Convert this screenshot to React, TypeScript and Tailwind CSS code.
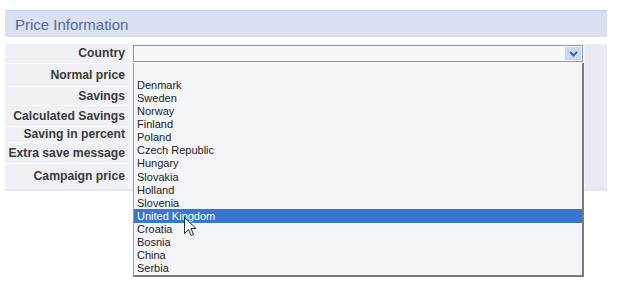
import React from "react";

const rows: { label: string; h: string }[] = [
  { label: "Country", h: "h-[20px]" },
  { label: "Normal price", h: "h-[23px]" },
  { label: "Savings", h: "h-[19px]" },
  { label: "Calculated Savings", h: "h-[21px]" },
  { label: "Saving in percent", h: "h-[16px]" },
  { label: "Extra save message", h: "h-[21px]" },
  { label: "Campaign price", h: "h-[25px]" },
];

const countries = [
  "",
  "Denmark",
  "Sweden",
  "Norway",
  "Finland",
  "Poland",
  "Czech Republic",
  "Hungary",
  "Slovakia",
  "Holland",
  "Slovenia",
  "United Kingdom",
  "Croatia",
  "Bosnia",
  "China",
  "Serbia",
];

export default function App() {
  return (
    <div
      className="relative w-[627px] h-[289px] bg-white overflow-hidden"
      style={{ fontFamily: '"Liberation Sans", Arial, sans-serif' }}
    >
      <div className="ml-[5px] w-[602px] pt-[10px]">
        <div className="h-[27px] bg-[#d9e0ef] border-t border-[#c6cee2] flex items-center pl-[10px] pt-[2px] text-[15px] text-[#5a6a9c]">
          Price Information
        </div>
        <div className="mt-[7px] flex border-b-[2px] border-[#e6e8ee]">
          <div className="w-[123px] bg-[#eef0f4] flex flex-col">
            {rows.map((r, i) => (
              <div
                key={r.label}
                className={`${r.h} flex items-center justify-end pr-[3px] text-[12.2px] font-bold text-[#3a3a3a] whitespace-nowrap ${
                  i < rows.length - 1 ? "border-b border-[#fafbfc]" : ""
                }`}
              >
                {r.label}
              </div>
            ))}
          </div>
          <div className="w-[457px] bg-[#f5f6f9] pl-[5px] pt-[1px]">
            <div className="w-[450px] h-[17px] border border-[#8a97b0] bg-[#f7f8fb] flex justify-end items-stretch p-[1px]">
              <div className="w-[16px] bg-[#c9d6ef] flex items-center justify-center">
                <svg width="9" height="6" viewBox="0 0 9 6">
                  <path d="M1 1 L4.5 4.5 L8 1" fill="none" stroke="#3f5fa8" strokeWidth="1.8" />
                </svg>
              </div>
            </div>
          </div>
          <div className="w-[22px] bg-[#e8ebf3]" />
        </div>
      </div>

      {/* dropdown list */}
      <div className="absolute left-[133px] top-[63px] w-[451px] h-[214px] bg-[#f4f5f9] border-l border-[#9a9a9a] border-r-[2px] border-b-[2px] border-r-[#7c7c7c] border-b-[#7c7c7c] flex flex-col pt-[2px]">
        {countries.map((c, i) => (
          <div
            key={i}
            className={`h-[13.25px] flex items-center pl-[3px] pt-[1px] text-[11px] leading-none whitespace-nowrap ${
              c === "United Kingdom" ? "bg-[#3877d0] text-white" : "text-[#222]"
            }`}
          >
            {c}
          </div>
        ))}
      </div>

      {/* cursor */}
      <svg className="absolute left-[184px] top-[217px]" width="13" height="21" viewBox="0 0 13 21">
        <path
          d="M0.5 0.5 L0.5 16.5 L4.5 12.5 L7 18.5 L9.5 17.5 L7 11.5 L12 11.5 Z"
          fill="#ffffff"
          stroke="#222"
          strokeWidth="1"
          strokeLinejoin="miter"
        />
      </svg>
    </div>
  );
}
